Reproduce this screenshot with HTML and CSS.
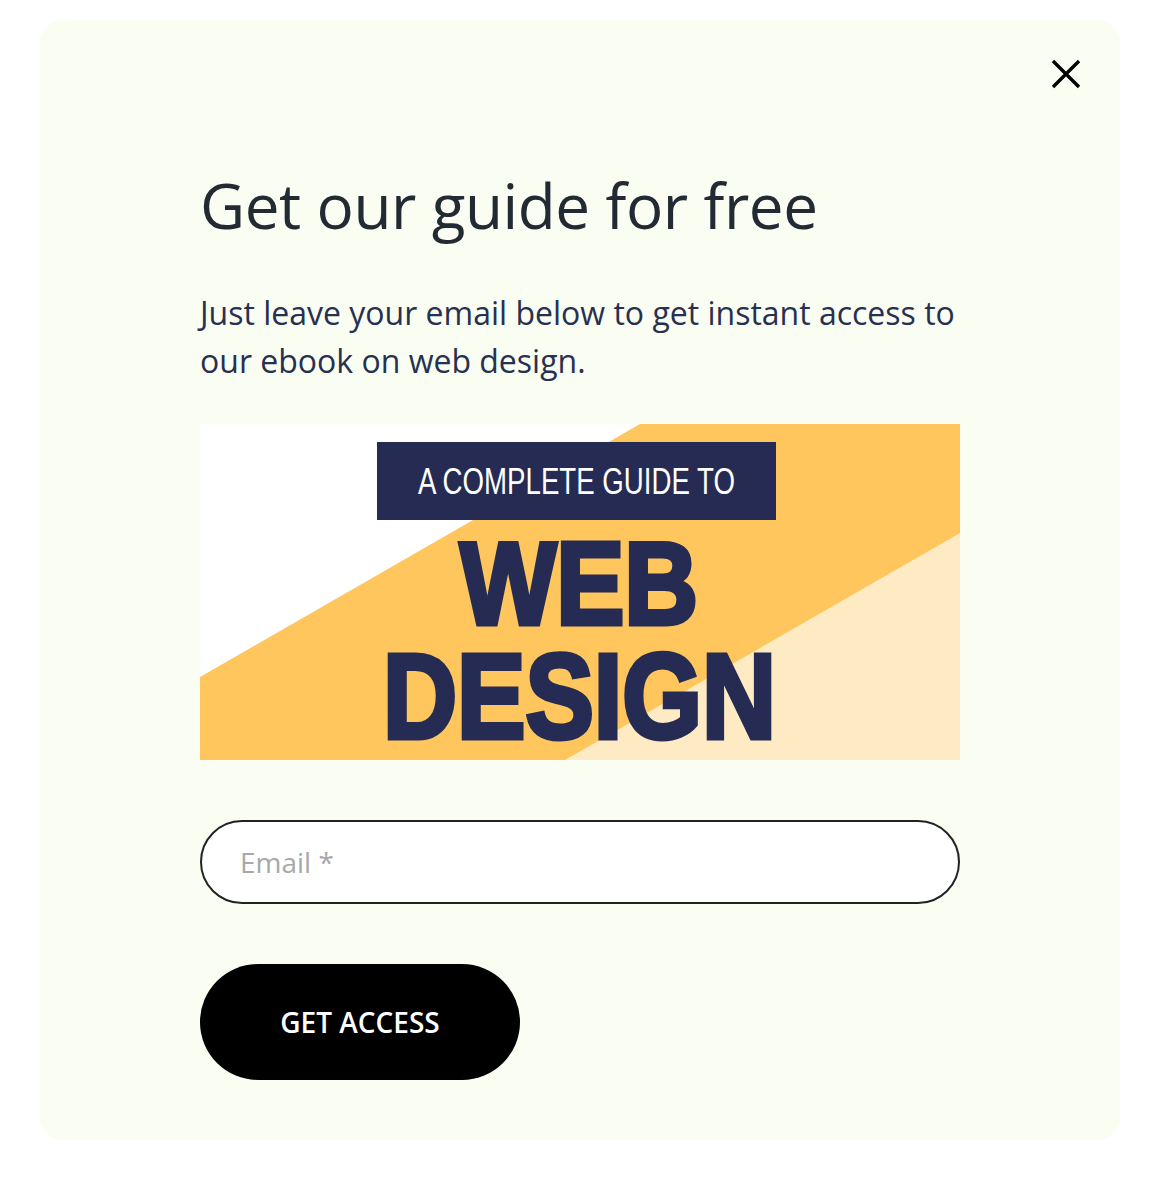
FILE: index.html
```html
<!DOCTYPE html>
<html lang="en">
<head>
<meta charset="utf-8">
<title>Get our guide for free</title>
<link rel="stylesheet" href="styles.css">
</head>
<body>
<div class="page">
  <div class="card">
    <button class="close" aria-label="Close">
      <svg width="30" height="30" viewBox="0 0 30 30"><path d="M2 2 L28 28 M28 2 L2 28" stroke="#000" stroke-width="3.4" fill="none"/></svg>
    </button>
    <div class="content">
      <h1 class="title">Get our guide for free</h1>
      <p class="lead">Just leave your email below to get instant access to our ebook on web design.</p>
      <div class="banner">
        <svg width="760" height="336" viewBox="0 0 760 336">
          <rect x="0" y="0" width="760" height="336" fill="#ffffff"/>
          <polygon points="0,253 440,0 760,0 760,336 0,336" fill="#fec65c"/>
          <polygon points="760,109 760,336 365,336" fill="#feeac3"/>
          <rect x="177" y="18" width="399" height="78" fill="#262b53"/>
          <text x="218" y="70" font-family="Liberation Sans, Arial, sans-serif" font-size="37" fill="#ffffff" textLength="317" lengthAdjust="spacingAndGlyphs">A COMPLETE GUIDE TO</text>
          <text x="260" y="200" font-family="Liberation Sans, Arial, sans-serif" font-weight="bold" font-size="116" fill="#262b53" stroke="#262b53" stroke-width="5" stroke-linejoin="miter" textLength="238" lengthAdjust="spacingAndGlyphs">WEB</text>
          <text x="183" y="314" font-family="Liberation Sans, Arial, sans-serif" font-weight="bold" font-size="120" fill="#262b53" stroke="#262b53" stroke-width="5" stroke-linejoin="miter" textLength="393" lengthAdjust="spacingAndGlyphs">DESIGN</text>
        </svg>
      </div>
      <form class="form">
        <input class="email" type="email" placeholder="Email *">
        <button class="submit" type="button">GET ACCESS</button>
      </form>
    </div>
  </div>
</div>
</body>
</html>
```
FILE: styles.css
```css
* { box-sizing: border-box; }
html, body { margin: 0; padding: 0; background: #ffffff; }
body { font-family: "Open Sans", "Noto Sans", sans-serif; }
.page { padding: 20px 40px 60px; }
.card {
  position: relative;
  background: #f9fdf2;
  border-radius: 22px;
  padding: 147px 160px 60px;
}
.close {
  position: absolute;
  top: 39px;
  right: 39px;
  width: 30px;
  height: 30px;
  padding: 0;
  border: 0;
  background: transparent;
  cursor: pointer;
}
.close svg { display: block; }
.title {
  margin: 0;
  font-size: 62px;
  line-height: 77px;
  font-weight: 400;
  color: #222a33;
  letter-spacing: -0.4px;
}
.lead {
  margin: 45px 0 0;
  font-size: 32px;
  line-height: 48px;
  color: #283050;
  width: 775px;
}
.banner { margin-top: 39px; width: 760px; height: 336px; }
.banner svg { display: block; }
.form { display: flex; flex-direction: column; align-items: flex-start; gap: 60px; margin-top: 60px; }
.email {
  width: 760px;
  height: 84px;
  border: 2px solid #222;
  border-radius: 42px;
  background: #fff;
  padding: 0 38px;
  font-family: "Open Sans", sans-serif;
  font-size: 28px;
  color: #222;
  outline: none;
}
.email::placeholder { color: #a8a8a8; }
.submit {
  width: 320px;
  height: 116px;
  border: 0;
  border-radius: 58px;
  background: #000;
  color: #fff;
  font-family: "Open Sans", sans-serif;
  font-size: 28px;
  font-weight: 600;
  cursor: pointer;
}
```
